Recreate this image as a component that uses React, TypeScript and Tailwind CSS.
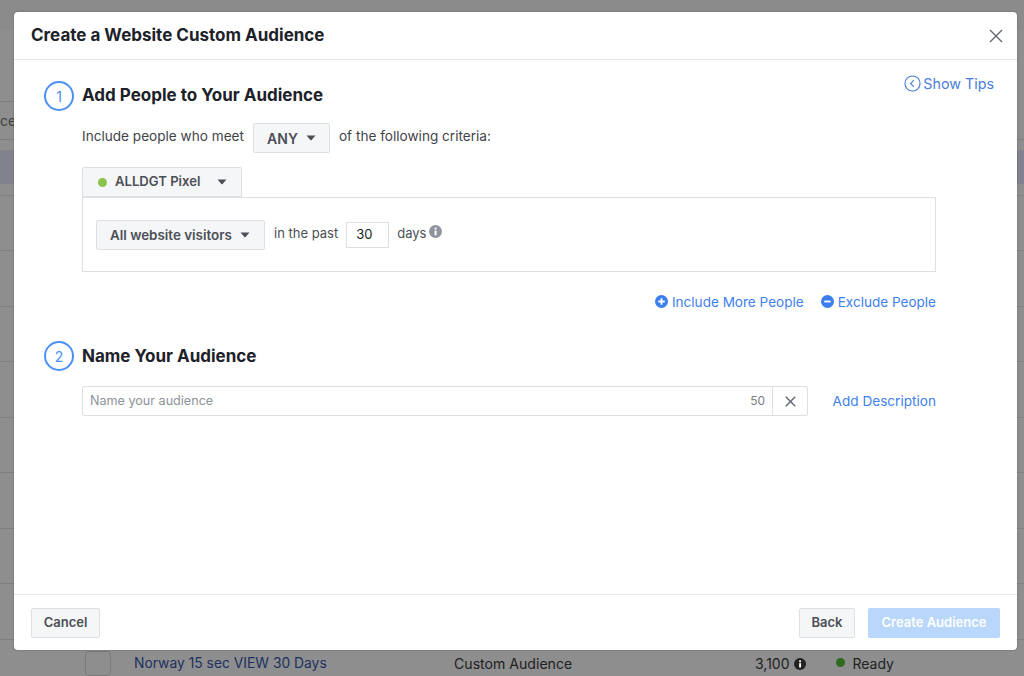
import React from "react";

const font = { fontFamily: "Inter, 'Liberation Sans', sans-serif" };

function Caret({ className = "" }: { className?: string }) {
  return (
    <svg width="10" height="6" viewBox="0 0 10 6" className={className}>
      <path d="M0.5 0.5 H9.5 L5.6 5 Q5 5.6 4.4 5 Z" fill="#4b4f56" />
    </svg>
  );
}

function StepCircle({ n }: { n: number }) {
  return (
    <div className="w-[30px] h-[30px] rounded-full border-2 border-[#4a90f5] flex items-center justify-center text-[14px] text-[#4a90f5] font-normal bg-white shrink-0">
      {n}
    </div>
  );
}

function InfoIcon({ color, size = 13 }: { color: string; size?: number }) {
  return (
    <svg width={size} height={size} viewBox="0 0 14 14">
      <circle cx="7" cy="7" r="7" fill={color} />
      <rect x="6" y="6" width="2.2" height="5" fill="#fff" />
      <circle cx="7.1" cy="3.9" r="1.25" fill="#fff" />
    </svg>
  );
}

function Cross({ size, color, width = 1.4 }: { size: number; color: string; width?: number }) {
  return (
    <svg width={size} height={size} viewBox="0 0 14 14">
      <path d="M1 1 L13 13 M13 1 L1 13" stroke={color} strokeWidth={width} fill="none" />
    </svg>
  );
}

const rows = [0, 1, 2, 3, 4, 5, 6, 7, 8];

export default function App() {
  return (
    <div className="relative w-[1024px] h-[676px] overflow-hidden bg-[#8e8e8e]" style={font}>
      {/* page behind the overlay */}
      <div className="flex flex-col h-full">
        <div className="h-[30px] bg-[#8b8b8b] shrink-0" />
        <div className="h-[72px] shrink-0">
          <div className="h-full w-[14px] border-b border-[#7d7d7d]" />
        </div>
        <div className="h-[38px] border-b border-[#7d7d7d] shrink-0 flex items-center text-[14px] text-[#3f3f3f]">
          <span className="w-[14px] overflow-hidden whitespace-nowrap leading-none">ce</span>
        </div>
        <div className="h-[511px] shrink-0 flex flex-col">
          {rows.map((r) => (
            <div key={r} className="h-[55.5px] shrink-0 border-b border-[#808080] flex items-center">
              {r === 0 && <div className="h-[34px] w-full bg-[#80838d]" />}
            </div>
          ))}
        </div>
        <div className="h-[25px] shrink-0 flex items-center pl-[85px] text-[14px] text-[#1d3161]">
          <div className="w-[26px] h-[25px] rounded-[4px] border border-[#7a7a7a] shrink-0" />
          <span className="ml-[23px] w-[320px] text-[13.85px]">Norway 15 sec VIEW 30 Days</span>
          <span className="w-[301px] text-[#222] text-[14.1px]">Custom Audience</span>
          <span className="text-[#222] flex items-center gap-[4px]">
            3,100 <InfoIcon color="#222" size={12} />
          </span>
          <span className="ml-[30px] w-[9px] h-[9px] rounded-full bg-[#2f6b1d] -mt-[3px]" />
          <span className="ml-[8px] text-[#222]">Ready</span>
        </div>
      </div>

      {/* modal */}
      <div className="absolute left-[14px] top-[12px] w-[1003px] h-[638px] bg-white rounded-[4px] flex flex-col text-[#1c1e21] shadow-[0_0_2px_rgba(0,0,0,0.35)]">
        <div className="h-[48px] shrink-0 border-b border-[#e5e6e9] flex items-center justify-between pl-[17px] pr-[14px]">
          <div className="text-[17px] font-bold text-[#1d2129]">Create a Website Custom Audience</div>
          <Cross size={14} color="#606770" className="" />
        </div>

        <div className="flex-1 relative flex flex-col pl-[30px] pr-[81px] pt-[21px]">
          <div className="absolute right-[23px] top-[13px] flex items-center text-[14.3px] text-[#4a7ed8] gap-[2px]">
            <svg width="17" height="17" viewBox="0 0 18 18">
              <circle cx="9" cy="9" r="8" fill="none" stroke="#4a7ed8" strokeWidth="1.2" />
              <path d="M10.5 5.5 L7 9 L10.5 12.5" fill="none" stroke="#4a7ed8" strokeWidth="1.2" />
            </svg>
            Show Tips
          </div>

          <div className="flex items-center gap-[8px]">
            <StepCircle n={1} />
            <div className="text-[17px] font-bold text-[#1d2129]">Add People to Your Audience</div>
          </div>

          <div className="pl-[38px]">
            <div className="flex items-center mt-[12px] text-[13.6px] text-[#3f4349]">
              <span className="pb-[3px]">Include people who meet</span>
              <div className="ml-[9px] w-[77px] h-[30px] bg-[#f5f6f7] border border-[#dddfe2] rounded-[2px] flex items-center justify-center gap-[8px] text-[14px] font-semibold text-[#4b4f56]">
                ANY <Caret />
              </div>
              <span className="ml-[9px] pb-[3px]">of the following criteria:</span>
            </div>

            <div className="mt-[14px] w-[160px] h-[30px] bg-[#f5f6f7] border border-[#dddfe2] rounded-t-[2px] flex items-center pl-[15px] text-[13.1px] font-semibold text-[#4b4f56]">
              <span className="w-[9px] h-[9px] rounded-full bg-[#8bc34a] mr-[8px]" />
              <span className="w-[102px]">ALLDGT Pixel</span>
              <Caret />
            </div>
            <div className="h-[75px] border border-[#dddfe2] flex items-start pl-[13px] pt-[22px] text-[13px] text-[#4b4f56]">
              <div className="w-[169px] h-[30px] bg-[#f5f6f7] border border-[#dddfe2] rounded-[2px] flex items-center pl-[13px] gap-[8px] text-[13.4px] font-semibold">
                All website visitors <Caret />
              </div>
              <span className="ml-[9px] h-[28px] flex items-center">in the past</span>
              <div className="ml-[8px] mt-[2px] w-[43px] h-[26px] border border-[#dddfe2] flex items-center pl-[9px] text-[13px] text-[#1c1e21]">30</div>
              <span className="ml-[8px] h-[28px] flex items-center">days</span>
              <span className="ml-[3px] mt-[5px]"><InfoIcon color="#90949c" /></span>
            </div>

            <div className="flex justify-end items-center mt-[20px] text-[13.55px] text-[#4080f0] gap-[17px]">
              <span className="flex items-center gap-[4px]">
                <svg width="13" height="13" viewBox="0 0 14 14" className="-mt-[2px]">
                  <circle cx="7" cy="7" r="7" fill="#3a7ef0" />
                  <path d="M3.5 7 H10.5 M7 3.5 V10.5" stroke="#fff" strokeWidth="2" />
                </svg>
                Include More People
              </span>
              <span className="flex items-center gap-[4px]">
                <svg width="13" height="13" viewBox="0 0 14 14" className="-mt-[2px]">
                  <circle cx="7" cy="7" r="7" fill="#3a7ef0" />
                  <path d="M3.5 7 H10.5" stroke="#fff" strokeWidth="2" />
                </svg>
                Exclude People
              </span>
            </div>
          </div>

          <div className="flex items-center gap-[8px] mt-[29px]">
            <StepCircle n={2} />
            <div className="text-[17px] font-bold text-[#1d2129]">Name Your Audience</div>
          </div>

          <div className="flex items-center pl-[38px] mt-[15px]">
            <div className="flex h-[30px] w-[726px] border border-[#dddfe2] rounded-[2px] text-[12.6px]">
              <div className="flex-1 flex items-center justify-between pl-[7px] pr-[7px]">
                <span className="text-[#8d9299]">Name your audience</span>
                <span className="text-[12px] text-[#7a7e85]">50</span>
              </div>
              <div className="w-[35px] border-l border-[#dddfe2] flex items-center justify-center">
                <Cross size={11} color="#606770" width={1.8} />
              </div>
            </div>
            <span className="ml-auto text-[13.6px] text-[#4080f0]">Add Description</span>
          </div>
        </div>

        <div className="h-[56px] shrink-0 border-t border-[#e5e6e9] flex items-center justify-between px-[17px] text-[13px] font-semibold text-[#4b4f56]">
          <div className="w-[69px] h-[30px] bg-[#f5f6f7] border border-[#dddfe2] rounded-[2px] flex items-center justify-center">Cancel</div>
          <div className="flex items-center gap-[13px]">
            <div className="w-[56px] h-[30px] bg-[#f5f6f7] border border-[#dddfe2] rounded-[2px] flex items-center justify-center">Back</div>
            <div className="w-[132px] h-[30px] bg-[#b9d6fb] rounded-[2px] flex items-center justify-center text-white">Create Audience</div>
          </div>
        </div>
      </div>
    </div>
  );
}
